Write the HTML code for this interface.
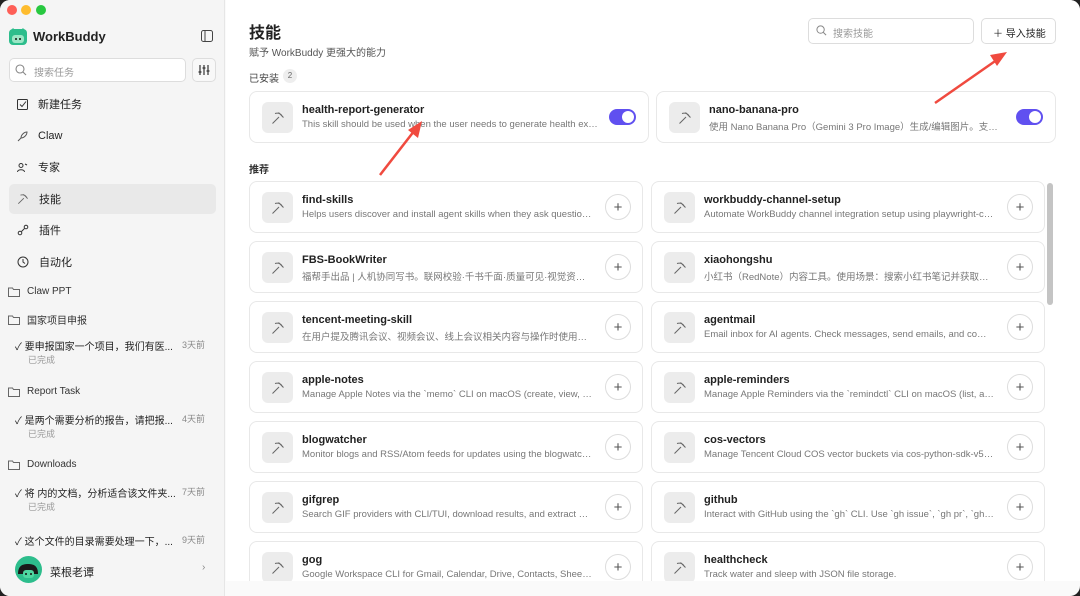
<!DOCTYPE html>
<html><head><meta charset="utf-8"><style>
*{box-sizing:border-box;margin:0;padding:0}
body{width:1080px;height:596px;overflow:hidden;background:#222;font-family:"Liberation Sans","Noto Sans CJK SC",sans-serif;color:#222;position:relative}
.win{position:absolute;left:0;top:0;width:1080px;height:596px;background:#fafafa;border-radius:10px;overflow:hidden}
.side{position:absolute;left:0;top:0;width:225px;height:596px;background:#f5f5f5;border-right:1px solid #e6e6e6}
.abs{position:absolute}
.dot{position:absolute;top:5px;width:10px;height:10px;border-radius:50%}
.nav{position:absolute;left:9px;width:207px;height:30px;display:flex;align-items:center;font-size:11px;color:#222;padding-left:8px}
.nav svg{margin-right:10px}
.fold{position:absolute;left:8px;font-size:10px;color:#333;display:flex;align-items:center}
.fold svg{margin-right:7px}
.task{position:absolute;left:15px;width:190px;font-size:10px;color:#222}
.task .t{position:absolute;right:0;top:0;font-size:9px;color:#888}
.task .d{position:absolute;left:13px;top:15px;font-size:9px;color:#999}
.main{position:absolute;left:226px;top:0;width:854px;height:581px;background:#fff;overflow:hidden}
.card{position:absolute;height:52px;border:1px solid #e8e8e8;border-radius:8px;background:#fff;width:394px}
.l{left:23px}.r{left:425px}
.ic{position:absolute;left:12px;top:10px;width:31px;height:31px;background:#ececec;border-radius:6px}
.pk{position:absolute;left:9px;top:9px}
.ttl{position:absolute;left:52px;top:12px;font-size:11px;font-weight:bold;color:#222;white-space:nowrap}
.dsc{position:absolute;left:52px;top:27px;font-size:9.5px;color:#777;white-space:nowrap;overflow:hidden;text-overflow:ellipsis;width:290px}
.plus{position:absolute;right:11px;top:12px;width:26px;height:26px;border:1px solid #ddd;border-radius:50%;font-size:15px;color:#555;display:flex;align-items:center;justify-content:center;line-height:1}
.tog{position:absolute;right:12px;top:17px;width:27px;height:16px;background:#6050f0;border-radius:8px}
.tog:after{content:"";position:absolute;right:2px;top:2px;width:12px;height:12px;border-radius:50%;background:#fff}
</style></head><body>
<svg width="0" height="0" style="position:absolute"><defs><symbol id="pk" viewBox="0 0 14 14"><path d="M1.5 12.5L8 6M4 2.5c3-1 6.5 0 7.5 3.5M7.5 1.5l5 5" fill="none" stroke="#666" stroke-width="1"/></symbol></defs></svg>
<div class="win">
<div class="side">
 <div class="dot" style="left:7px;background:#fe5f57"></div>
 <div class="dot" style="left:21px;background:#febc2e"></div>
 <div class="dot" style="left:36px;background:#28c840"></div>
 <svg class="abs" style="left:9px;top:27px" width="18" height="18" viewBox="0 0 18 18"><rect x="0" y="2" width="18" height="16" rx="4" fill="#2dbd8c"/><path d="M0 6 L4 1 L7 4 Z M18 6 L14 1 L11 4Z" fill="#2dbd8c"/><rect x="3" y="8" width="12" height="8" rx="3" fill="#9ae6c5"/><circle cx="7" cy="12" r="1" fill="#111"/><circle cx="11" cy="12" r="1" fill="#111"/></svg>
 <div class="abs" style="left:33px;top:29px;font-size:13px;font-weight:bold">WorkBuddy</div>
 <svg class="abs" style="left:201px;top:30px" width="12" height="12" viewBox="0 0 12 12" fill="none" stroke="#444" stroke-width="1"><rect x="0.5" y="0.5" width="11" height="11" rx="2"/><path d="M4 1v10"/></svg>
 <div class="abs" style="left:9px;top:58px;width:177px;height:24px;background:#fff;border:1px solid #ddd;border-radius:5px;font-size:10px;color:#999;padding:5px 0 0 24px">搜索任务</div>
 <svg class="abs" style="left:15px;top:64px" width="12" height="12" viewBox="0 0 12 12" fill="none" stroke="#888" stroke-width="1.1"><circle cx="5" cy="5" r="4"/><path d="M8 8l3 3"/></svg>
 <div class="abs" style="left:192px;top:58px;width:24px;height:24px;border:1px solid #ddd;border-radius:5px;background:#f8f8f8"></div>
 <svg class="abs" style="left:198px;top:64px" width="12" height="12" viewBox="0 0 12 12" stroke="#333" stroke-width="1.2"><path d="M2 1v10M6 1v10M10 1v10M0.5 8h3M4.5 4h3M8.5 7h3"/></svg>
 <div class="nav" style="top:89px"><svg width="11" height="11" viewBox="0 0 11 11" fill="none" stroke="#333"><rect x=".5" y=".5" width="10" height="10" rx="1"/><path d="M3 5.5l2 2 4-5"/></svg>新建任务</div>
 <div class="nav" style="top:121px"><svg width="11" height="11" viewBox="0 0 11 11" fill="none" stroke="#555"><path d="M1 10l3-3M4 7c0-3 3-6 6-6-0 3-3 6-6 6z"/></svg>Claw</div>
 <div class="nav" style="top:152px"><svg width="11" height="11" viewBox="0 0 11 11" fill="none" stroke="#333"><circle cx="4" cy="3.5" r="2"/><path d="M0.5 10c0-3 7-3 7 0M8 2l2 1"/></svg>专家</div>
 <div class="nav" style="top:184px;background:#e9e9e9;border-radius:5px"><svg width="12" height="12" viewBox="0 0 14 14"><use href="#pk"/></svg>技能</div>
 <div class="nav" style="top:215px"><svg width="12" height="12" viewBox="0 0 12 12" fill="none" stroke="#333"><circle cx="3" cy="9" r="1.8"/><circle cx="9" cy="3" r="1.8"/><path d="M4.5 7.5l3-3"/></svg>插件</div>
 <div class="nav" style="top:247px"><svg width="12" height="12" viewBox="0 0 12 12" fill="none" stroke="#333"><circle cx="6" cy="6" r="5"/><path d="M6 3v3l2 1.5"/></svg>自动化</div>
 <div class="fold" style="top:286px"><svg width="12" height="10" viewBox="0 0 12 10" fill="none" stroke="#666"><path d="M.5 1h4l1 1.5h6v7H.5z"/></svg>Claw PPT</div>
 <div class="fold" style="top:312px"><svg width="12" height="10" viewBox="0 0 12 10" fill="none" stroke="#666"><path d="M.5 1h4l1 1.5h6v7H.5z"/></svg>国家项目申报</div>
 <div class="task" style="top:338px">✓ 要申报国家一个项目，我们有医...<span class="t">3天前</span><span class="d">已完成</span></div>
 <div class="fold" style="top:386px"><svg width="12" height="10" viewBox="0 0 12 10" fill="none" stroke="#666"><path d="M.5 1h4l1 1.5h6v7H.5z"/></svg>Report Task</div>
 <div class="task" style="top:412px">✓ 是两个需要分析的报告，请把报...<span class="t">4天前</span><span class="d">已完成</span></div>
 <div class="fold" style="top:459px"><svg width="12" height="10" viewBox="0 0 12 10" fill="none" stroke="#666"><path d="M.5 1h4l1 1.5h6v7H.5z"/></svg>Downloads</div>
 <div class="task" style="top:485px">✓ 将 内的文档，分析适合该文件夹...<span class="t">7天前</span><span class="d">已完成</span></div>
 <div class="task" style="top:533px">✓ 这个文件的目录需要处理一下，...<span class="t">9天前</span></div>
 <svg class="abs" style="left:15px;top:556px" width="27" height="27" viewBox="0 0 27 27"><circle cx="13.5" cy="13.5" r="13.5" fill="#2dbd8c"/><path d="M3 18c0-8 4-10 10-10s10 2 10 10z" fill="#1a1a1a"/><rect x="8" y="14" width="11" height="8" rx="3" fill="#4fd6a0"/><circle cx="11" cy="18" r="1" fill="#111"/><circle cx="16" cy="18" r="1" fill="#111"/></svg>
 <div class="abs" style="left:50px;top:564px;font-size:11px">菜根老谭</div>
 <div class="abs" style="left:202px;top:562px;font-size:10px;color:#888">›</div>
</div>
<div class="main">
 <div class="abs" style="left:23px;top:19px;font-size:16px;font-weight:bold">技能</div>
 <div class="abs" style="left:23px;top:44px;font-size:10px;color:#555">赋予 WorkBuddy 更强大的能力</div>
 <div class="abs" style="left:582px;top:18px;width:166px;height:26px;border:1px solid #ddd;border-radius:5px;font-size:10px;color:#999;padding:6px 0 0 24px">搜索技能</div>
 <svg class="abs" style="left:590px;top:25px" width="11" height="11" viewBox="0 0 12 12" fill="none" stroke="#888" stroke-width="1.1"><circle cx="5" cy="5" r="4"/><path d="M8 8l3 3"/></svg>
 <div class="abs" style="left:755px;top:18px;width:75px;height:26px;border:1px solid #ddd;border-radius:5px;font-size:10px;color:#222;padding:6px 0 0 11px">＋ 导入技能</div>
 <div class="abs" style="left:23px;top:70px;font-size:10px;color:#444">已安装</div>
 <div class="abs" style="left:57px;top:69px;width:14px;height:14px;border-radius:50%;background:#eee;font-size:8px;color:#666;text-align:center;line-height:14px">2</div>

 <div class="card" style="left:23px;top:91px;width:400px"><div class="ic"><svg class="pk" width="14" height="14"><use href="#pk"/></svg></div><div class="ttl">health-report-generator</div><div class="dsc" style="width:298px">This skill should be used when the user needs to generate health examination reports</div><div class="tog"></div></div>
 <div class="card" style="left:430px;top:91px;width:400px"><div class="ic"><svg class="pk" width="14" height="14"><use href="#pk"/></svg></div><div class="ttl">nano-banana-pro</div><div class="dsc" style="width:298px">使用 Nano Banana Pro（Gemini 3 Pro Image）生成/编辑图片。支持图像生成</div><div class="tog"></div></div>

 <div class="abs" style="left:23px;top:161px;font-size:10px;font-weight:bold;color:#333">推荐</div>
 <div class="abs" style="left:821px;top:183px;width:6px;height:122px;background:#c4c4c4;border-radius:3px"></div>

 <div class="card l" style="top:181px"><div class="ic"><svg class="pk" width="14" height="14"><use href="#pk"/></svg></div><div class="ttl">find-skills</div><div class="dsc">Helps users discover and install agent skills when they ask questions like how do I</div><div class="plus">+</div></div>
 <div class="card r" style="top:181px"><div class="ic"><svg class="pk" width="14" height="14"><use href="#pk"/></svg></div><div class="ttl">workbuddy-channel-setup</div><div class="dsc">Automate WorkBuddy channel integration setup using playwright-cli browser</div><div class="plus">+</div></div>

 <div class="card l" style="top:241px"><div class="ic"><svg class="pk" width="14" height="14"><use href="#pk"/></svg></div><div class="ttl">FBS-BookWriter</div><div class="dsc">福帮手出品 | 人机协同写书。联网校验·千书千面·质量可见·视觉资产。更多</div><div class="plus">+</div></div>
 <div class="card r" style="top:241px"><div class="ic"><svg class="pk" width="14" height="14"><use href="#pk"/></svg></div><div class="ttl">xiaohongshu</div><div class="dsc">小红书（RedNote）内容工具。使用场景：搜索小红书笔记并获取详情信息</div><div class="plus">+</div></div>

 <div class="card l" style="top:301px"><div class="ic"><svg class="pk" width="14" height="14"><use href="#pk"/></svg></div><div class="ttl">tencent-meeting-skill</div><div class="dsc">在用户提及腾讯会议、视频会议、线上会议相关内容与操作时使用此技能进行处理</div><div class="plus">+</div></div>
 <div class="card r" style="top:301px"><div class="ic"><svg class="pk" width="14" height="14"><use href="#pk"/></svg></div><div class="ttl">agentmail</div><div class="dsc">Email inbox for AI agents. Check messages, send emails, and communicate</div><div class="plus">+</div></div>

 <div class="card l" style="top:361px"><div class="ic"><svg class="pk" width="14" height="14"><use href="#pk"/></svg></div><div class="ttl">apple-notes</div><div class="dsc">Manage Apple Notes via the `memo` CLI on macOS (create, view, edit, delete, search)</div><div class="plus">+</div></div>
 <div class="card r" style="top:361px"><div class="ic"><svg class="pk" width="14" height="14"><use href="#pk"/></svg></div><div class="ttl">apple-reminders</div><div class="dsc">Manage Apple Reminders via the `remindctl` CLI on macOS (list, add, edit, complete)</div><div class="plus">+</div></div>

 <div class="card l" style="top:421px"><div class="ic"><svg class="pk" width="14" height="14"><use href="#pk"/></svg></div><div class="ttl">blogwatcher</div><div class="dsc">Monitor blogs and RSS/Atom feeds for updates using the blogwatcher CLI</div><div class="plus">+</div></div>
 <div class="card r" style="top:421px"><div class="ic"><svg class="pk" width="14" height="14"><use href="#pk"/></svg></div><div class="ttl">cos-vectors</div><div class="dsc">Manage Tencent Cloud COS vector buckets via cos-python-sdk-v5 and more</div><div class="plus">+</div></div>

 <div class="card l" style="top:481px"><div class="ic"><svg class="pk" width="14" height="14"><use href="#pk"/></svg></div><div class="ttl">gifgrep</div><div class="dsc">Search GIF providers with CLI/TUI, download results, and extract stills and sheets</div><div class="plus">+</div></div>
 <div class="card r" style="top:481px"><div class="ic"><svg class="pk" width="14" height="14"><use href="#pk"/></svg></div><div class="ttl">github</div><div class="dsc">Interact with GitHub using the `gh` CLI. Use `gh issue`, `gh pr`, `gh run`, `gh api`</div><div class="plus">+</div></div>

 <div class="card l" style="top:541px"><div class="ic"><svg class="pk" width="14" height="14"><use href="#pk"/></svg></div><div class="ttl">gog</div><div class="dsc">Google Workspace CLI for Gmail, Calendar, Drive, Contacts, Sheets, Docs</div><div class="plus">+</div></div>
 <div class="card r" style="top:541px"><div class="ic"><svg class="pk" width="14" height="14"><use href="#pk"/></svg></div><div class="ttl">healthcheck</div><div class="dsc">Track water and sleep with JSON file storage.</div><div class="plus">+</div></div>

 <svg class="abs" style="left:150px;top:118px" width="50" height="60"><path d="M4 57L42 8" stroke="#f04a3f" stroke-width="2.5"/><path d="M46 3L32 12L42 20Z" fill="#f04a3f"/></svg>
 <svg class="abs" style="left:705px;top:45px" width="80" height="62"><path d="M4 58L70 12" stroke="#f04a3f" stroke-width="2.5"/><path d="M76 7L59 10L66 21Z" fill="#f04a3f"/></svg>
</div>
</div>
</body></html>
